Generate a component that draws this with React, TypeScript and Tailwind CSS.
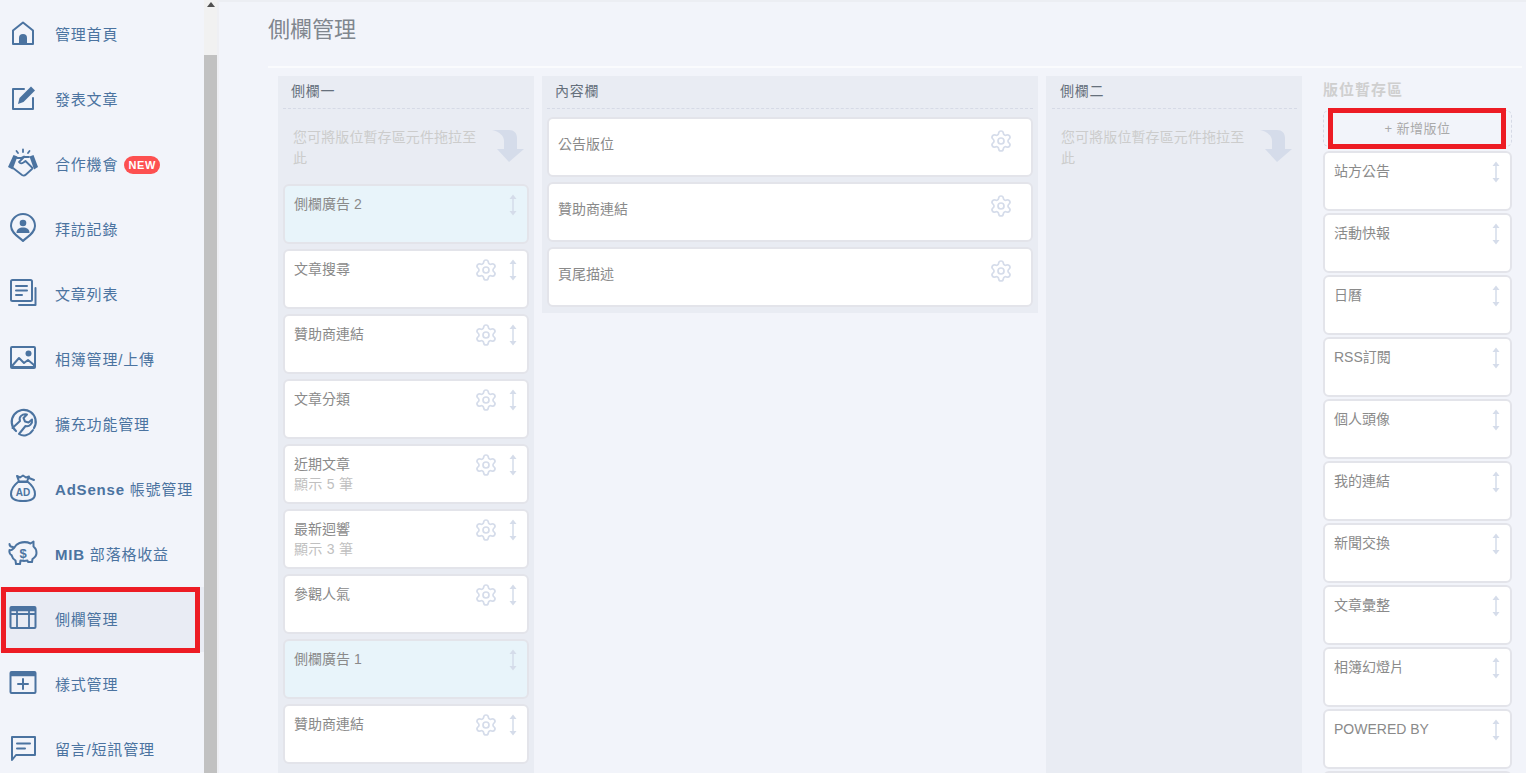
import type { ReactNode } from "react";
import { Settings } from "lucide-react";

const font = "font-['Liberation_Sans','Noto_Sans_CJK_TC',sans-serif]";

function Svg({ children, className }: { children: ReactNode; className?: string }) {
  return (
    <svg viewBox="0 0 32 32" className={className ?? "w-8 h-8"} fill="none" stroke="#4b73a0" strokeWidth="2" strokeLinejoin="round" strokeLinecap="round">
      {children}
    </svg>
  );
}

const icons: Record<string, ReactNode> = {
  home: (
    <Svg>
      <path d="M6 13.500 16 5.500l10 8V27H6z" />
      <path d="M12 27v-6a4 4 0 0 1 8 0v6z" fill="#4b73a0" stroke="none" />
    </Svg>
  ),
  edit: (
    <Svg>
      <path d="M17 7H6v20h20V16" />
      <path d="M11 22l1.500-6L24 4.500l4 4L16.500 20z" fill="#4b73a0" stroke="none" />
    </Svg>
  ),
  shake: (
    <Svg>
      <path d="M1 20 6.500 8l4 1.500-5 13z" fill="#4b73a0" stroke="none" />
      <path d="M31 20 26.500 8l-4 1.500 4.500 13z" fill="#4b73a0" stroke="none" />
      <path d="M6 21l9 7c1.500 1 3 .5 4-.5l6-5.500M10 11h4l3-1.500M22 10h-5l-5 5c1 1.500 3 1.500 4.500.5l2-1.500 7 7" strokeWidth="1.800" />
      <path d="M16 5V2.500M11 6 9.500 4M21 6l1.500-2" strokeWidth="1.800" />
    </Svg>
  ),
  pin: (
    <Svg>
      <path d="M16 29C12 25 4 21 4 14a12 12 0 0 1 24 0c0 7-8 11-12 15z" />
      <circle cx="16" cy="11" r="3.300" fill="#4b73a0" stroke="none" />
      <path d="M9.500 21c0-4 3-5.500 6.500-5.500s6.500 1.500 6.500 5.500z" fill="#4b73a0" stroke="none" />
    </Svg>
  ),
  list: (
    <Svg>
      <rect x="4" y="3" width="21" height="21" rx="1.500" />
      <path d="M9 9h11M9 13.500h11M9 18h6" />
      <path d="M28.500 11v17H12" />
    </Svg>
  ),
  image: (
    <Svg>
      <rect x="4" y="5" width="24" height="21" rx="1" />
      <path d="M5 24l7-8 5 5 4-3 6 5v2H5z" />
      <circle cx="21.500" cy="11.500" r="3" fill="#4b73a0" stroke="none" />
    </Svg>
  ),
  wrench: (
    <Svg>
      <path d="M9 24A12 12 0 1 1 27 21" strokeWidth="2.200" />
      <path d="M5.500 21 13 14c-1.500-4 2-7.500 7-6.500l-3.500 3.500 1.500 3.500 3.500 1 3.500-3c.8 4-2.500 7.500-6.500 6.500L12 27c4 2.500 10 2 14-4" />
    </Svg>
  ),
  bag: (
    <Svg>
      <path d="M11 10C6 14 4 18 4 22c0 5 4 7 12 7s12-2 12-7c0-4-2-8-7-12z" />
      <path d="M10 4l3 1.500L16 3.500l3 2 3-1-2 5H12z" />
      <path d="M22 6l5 2" />
      <text x="16" y="24" textAnchor="middle" fontSize="10" fontWeight="700" fill="#4b73a0" stroke="none" fontFamily="Liberation Sans">AD</text>
    </Svg>
  ),
  pig: (
    <Svg>
      <path d="M7 11c1-2 3-4 5.500-5 4-1.300 8-1 11 .5l3-2v5c2 1.500 3 4 3 6.500s-2.500 5-4 6l-.5 3h-4l-.5-1.500c-2 .5-5 .5-7 0L13 27H9l-.5-3.500C6 22 5 20 4.500 18 3 18 2 15 2.500 13 4 14 6 12 7 11z" />
      <path d="M2.500 7C2.500 9 4 10 6 10" />
      <text x="16" y="20.500" textAnchor="middle" fontSize="13" fontWeight="700" fill="#4b73a0" stroke="none" fontFamily="Liberation Sans">$</text>
    </Svg>
  ),
  layout: (
    <Svg>
      <rect x="3.500" y="5" width="25" height="21" rx="1" />
      <path d="M3 7.500h26" strokeWidth="3.500" strokeLinecap="butt" />
      <path d="M10 9v17M22 9v17M4 12h24" strokeWidth="1.800" />
    </Svg>
  ),
  plus: (
    <Svg>
      <rect x="3.500" y="5" width="25" height="21" rx="1" />
      <path d="M3 7.500h26" strokeWidth="3.500" strokeLinecap="butt" />
      <path d="M16 12v10M11 17h10" />
    </Svg>
  ),
  message: (
    <Svg>
      <path d="M5 5h23v18H9l-4 5z" />
      <path d="M10 11.500h13M10 16.500h8" />
    </Svg>
  ),
};

const menu: { icon: string; label: ReactNode; isNew?: boolean; active?: boolean }[] = [
  { icon: "home", label: "管理首頁" },
  { icon: "edit", label: "發表文章" },
  { icon: "shake", label: "合作機會", isNew: true },
  { icon: "pin", label: "拜訪記錄" },
  { icon: "list", label: "文章列表" },
  { icon: "image", label: "相簿管理/上傳" },
  { icon: "wrench", label: "擴充功能管理" },
  { icon: "bag", label: <><b className="tracking-[0.8px]">AdSense</b> 帳號管理</> },
  { icon: "pig", label: <><b>MIB</b> 部落格收益</> },
  { icon: "layout", label: "側欄管理", active: true },
  { icon: "plus", label: "樣式管理" },
  { icon: "message", label: "留言/短訊管理" },
];

function UpDown() {
  return (
    <svg viewBox="0 0 12 22" className="w-3 h-[22px] shrink-0">
      <path d="M6 3v16" stroke="#d5dcea" strokeWidth="1.500" />
      <path d="M2.500 5 6 .5 9.500 5zM2.500 17 6 21.500 9.500 17z" fill="#d5dcea" />
    </svg>
  );
}

function CurveArrow() {
  return (
    <svg viewBox="0 0 32 32" className="w-8 h-8 shrink-0" fill="#d5dcea">
      <path d="M0 0h17c5 0 8 3 8 8v11h7L17 32 5 19h7v-8c0-5-4-9-12-11z" />
    </svg>
  );
}

function Card({ title, sub, blue, gear = true, arrow = true }: { title: string; sub?: string; blue?: boolean; gear?: boolean; arrow?: boolean }) {
  return (
    <div className={`h-[60px] shrink-0 rounded-[6px] border-2 border-[#e3e4ea] pl-[9px] pr-[8px] pt-[8px] flex items-start ${blue ? "bg-[#e8f4fa]" : "bg-white"}`}>
      <div className="flex-1 text-[14px] leading-[20px] text-[#8a8a8a]">
        {title}
        {sub && <div className="text-[#c0c0c0] tracking-[0.3px]">{sub}</div>}
      </div>
      {gear && <Settings size={24} strokeWidth={1.700} className="text-[#d5dcea] mr-[9px] -mt-[1px]" />}
      {arrow && <UpDown />}
    </div>
  );
}

function ColumnHead({ title }: { title: string }) {
  return (
    <div className="h-[33px] mx-[5px] pl-[8px] border-b border-dashed border-[#d6dae6] text-[14px] leading-[30px] tracking-[0.7px] text-[#66707c]">
      {title}
    </div>
  );
}

function DropHint() {
  return (
    <div className="flex pl-[15px] pr-[10px] pt-[18px] h-[75px]">
      <p className="w-[190px] text-[14px] leading-[21px] tracking-[0.1px] text-[#cccccc]">您可將版位暫存區元件拖拉至此</p>
      <div className="ml-auto pt-[3px]"><CurveArrow /></div>
    </div>
  );
}

const col1 = [
  { title: "側欄廣告 2", blue: true, gear: false },
  { title: "文章搜尋" },
  { title: "贊助商連結" },
  { title: "文章分類" },
  { title: "近期文章", sub: "顯示 5 筆" },
  { title: "最新迴響", sub: "顯示 3 筆" },
  { title: "參觀人氣" },
  { title: "側欄廣告 1", blue: true, gear: false },
  { title: "贊助商連結" },
];

const stash = ["站方公告", "活動快報", "日曆", "RSS訂閱", "個人頭像", "我的連結", "新聞交換", "文章彙整", "相簿幻燈片", "POWERED BY", ""];

export default function App() {
  return (
    <div className={`${font} flex h-screen overflow-hidden bg-[#f2f4fa]`}>
      <aside className="w-[204px] shrink-0 pt-[2px] overflow-hidden">
        {menu.map((m) => (
          <div key={m.icon} className={`relative h-[65px] flex items-center pl-[6px] ${m.active ? "bg-[#e9ecf4]" : ""}`}>
            <span className="w-[33px] flex justify-center shrink-0 mb-[3px]">{icons[m.icon]}</span>
            <span className="ml-[16px] mt-[1px] text-[15px] tracking-[0.8px] text-[#4b73a0] whitespace-nowrap">{m.label}</span>
            {m.isNew && (
              <span className="ml-[6px] h-[18px] w-[36px] rounded-full bg-[#fd5050] text-white text-[11px] font-bold leading-[18px] text-center tracking-[0.6px]">NEW</span>
            )}
            {m.active && <div className="absolute left-[1px] top-0 w-[199px] h-[66px] border-[5px] border-[#ed1c24]" />}
          </div>
        ))}
      </aside>

      <div className="w-[15px] shrink-0 flex flex-col bg-[#f1f1f1] border-r-2 border-[#eeeff3]">
        <div className="h-[55px] flex justify-center pt-[2px]">
          <span className="w-0 h-0 border-x-[4px] border-x-transparent border-b-[5px] border-b-[#505050]" />
        </div>
        <div className="flex-1 bg-[#c1c1c1]" />
      </div>

      <main className="flex-1 min-w-0 pl-[49px] pr-[4px] border-t-2 border-[#eceef3]">
        <h1 className="h-[64px] pt-[13px] text-[22px] leading-[30px] font-normal text-[#80868e]">側欄管理</h1>
        <div className="h-[2px] bg-[#fafbfd]" />
        <div className="flex items-start pl-[10px] pt-[8px] gap-[8px]">
          <section className="w-[256px] h-[720px] shrink-0 bg-[#e9ecf3]">
            <ColumnHead title="側欄一" />
            <DropHint />
            <div className="flex flex-col gap-[5px] px-[5px]">
              {col1.map((c, i) => <Card key={i} {...c} />)}
            </div>
          </section>

          <section className="w-[496px] shrink-0 bg-[#e9ecf3] pb-[6px]">
            <ColumnHead title="內容欄" />
            <div className="flex flex-col gap-[5px] px-[5px] pt-[8px]">
              {["公告版位", "贊助商連結", "頁尾描述"].map((t) => (
                <div key={t} className="h-[60px] rounded-[6px] border-2 border-[#e3e4ea] bg-white flex items-start pl-[9px] pr-[18px] pt-[10px]">
                  <span className="flex-1 pt-[5px] text-[14px] leading-[20px] text-[#8a8a8a]">{t}</span>
                  <Settings size={24} strokeWidth={1.700} className="text-[#d5dcea]" />
                </div>
              ))}
            </div>
          </section>

          <section className="w-[256px] h-[720px] shrink-0 bg-[#e9ecf3]">
            <div className="pl-[1px]"><ColumnHead title="側欄二" /></div>
            <DropHint />
          </section>

          <section className="w-[189px] ml-[13px] shrink-0">
            <h2 className="h-[34px] pt-[1px] text-[15px] leading-[26px] font-bold tracking-[1px] text-[#cfcfcf]">版位暫存區</h2>
            <div className="relative h-[37px] rounded-[6px] border border-dashed border-[#d6dae6] text-center text-[13px] leading-[35px] tracking-[0.5px] text-[#a9a9a9]">
              + 新增版位
              <div className="absolute left-[4px] top-[-3px] w-[178px] h-[41px] border-[5px] border-[#ed1c24]" />
            </div>
            <div className="flex flex-col gap-[2px] pt-[4px]">
              {stash.map((t, i) => <Card key={i} title={t} gear={false} arrow={t !== ""} />)}
            </div>
          </section>
        </div>
      </main>
    </div>
  );
}
